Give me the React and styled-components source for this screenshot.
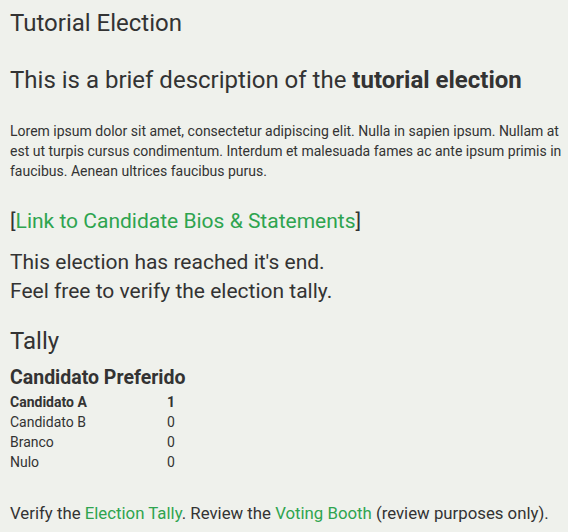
import React from "react";
import styled, { createGlobalStyle } from "styled-components";

const Global = createGlobalStyle`
  html, body { margin: 0; padding: 0; background: #eff1ec; }
  body { font-family: Roboto, "Liberation Sans", sans-serif; color: #333333; }
`;

const Page = styled.div`
  padding: 7px 6px 10px 10px;
  display: flex;
  flex-direction: column;
`;

const Title = styled.h1`
  margin: 0;
  font-size: 24px;
  font-weight: 400;
  line-height: 32px;
`;

const Subtitle = styled.h2`
  margin: 25px 0 0 0;
  font-size: 24px;
  font-weight: 400;
  line-height: 32px;
  b { font-weight: 700; }
`;

const Para = styled.p`
  margin: 25px 0 0 0;
  font-size: 14px;
  line-height: 20px;
`;

const LinkLine = styled.div`
  margin-top: 26px;
  font-size: 21px;
  line-height: 28px;
`;

const A = styled.a`
  color: #2ea44f;
  text-decoration: none;
`;

const Ended = styled.div`
  margin-top: 13px;
  font-size: 21px;
  line-height: 29px;
`;

const TallyHead = styled.h3`
  margin: 19px 0 0 0;
  font-size: 24px;
  font-weight: 400;
  line-height: 32px;
`;

const Question = styled.h4`
  margin: 7px 0 0 0;
  font-size: 19.5px;
  font-weight: 700;
  line-height: 28px;
`;

const Table = styled.div`
  display: grid;
  grid-template-columns: 157px auto;
  font-size: 14px;
  line-height: 20px;
`;

const Cell = styled.div`
  font-weight: ${(p) => (p.$win ? 700 : 400)};
`;

const Footer = styled.div`
  margin-top: 30px;
  font-size: 16.8px;
  line-height: 22px;
`;

const rows = [
  { name: "Candidato A", votes: 1, win: true },
  { name: "Candidato B", votes: 0 },
  { name: "Branco", votes: 0 },
  { name: "Nulo", votes: 0 },
];

export default function App() {
  return (
    <>
      <Global />
      <Page>
        <Title>Tutorial Election</Title>
        <Subtitle>
          This is a brief description of the <b>tutorial election</b>
        </Subtitle>
        <Para>
          Lorem ipsum dolor sit amet, consectetur adipiscing elit. Nulla in sapien ipsum. Nullam at est ut
          turpis cursus condimentum. Interdum et malesuada fames ac ante ipsum primis in faucibus. Aenean
          ultrices faucibus purus.
        </Para>
        <LinkLine>
          [<A href="#">Link to Candidate Bios &amp; Statements</A>]
        </LinkLine>
        <Ended>
          This election has reached it's end.
          <br />
          Feel free to verify the election tally.
        </Ended>
        <TallyHead>Tally</TallyHead>
        <Question>Candidato Preferido</Question>
        <Table>
          {rows.map((r) => (
            <React.Fragment key={r.name}>
              <Cell $win={r.win}>{r.name}</Cell>
              <Cell $win={r.win}>{r.votes}</Cell>
            </React.Fragment>
          ))}
        </Table>
        <Footer>
          Verify the <A href="#">Election Tally</A>. Review the <A href="#">Voting Booth</A> (review purposes
          only).
        </Footer>
      </Page>
    </>
  );
}
